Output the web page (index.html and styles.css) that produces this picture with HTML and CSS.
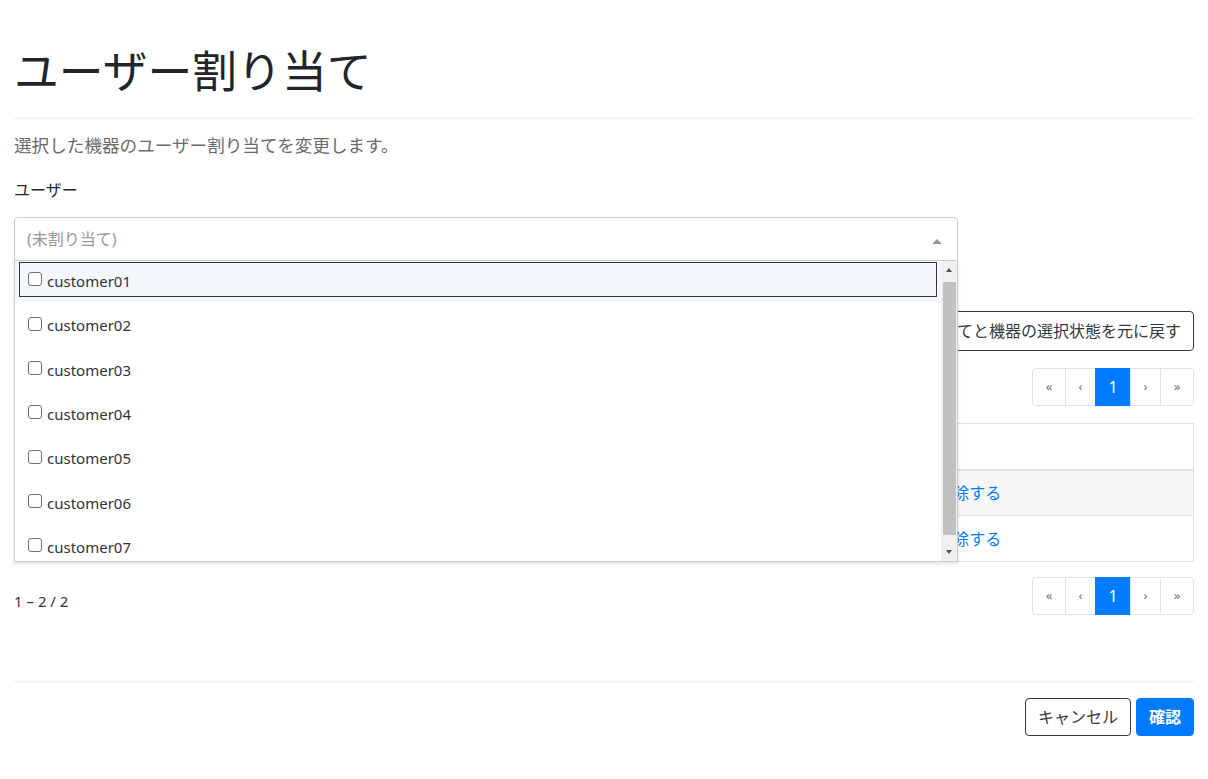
FILE: index.html
```html
<!DOCTYPE html>
<html lang="ja">
<head>
  <meta charset="UTF-8">
  <meta name="viewport" content="width=device-width, initial-scale=1.0">
  <title>ユーザー割り当て</title>
  <link rel="stylesheet" href="styles.css">
</head>
<body>
  <div class="page">
    <h1 class="page-title">ユーザー割り当て</h1>
    <p class="page-desc">選択した機器のユーザー割り当てを変更します。</p>

    <div class="form-group">
      <label class="form-label">ユーザー</label>
      <div class="picker">
        <div class="picker-box">
          <span class="picker-placeholder">(未割り当て)</span>
          <span class="picker-caret"></span>
        </div>
        <!-- open dropdown, lies over the content below -->
        <div class="picker-menu">
          <ul class="picker-list">
            <li class="picker-item active"><div class="picker-opt"><span class="check"></span>customer01</div></li>
            <li class="picker-item"><div class="picker-opt"><span class="check"></span>customer02</div></li>
            <li class="picker-item"><div class="picker-opt"><span class="check"></span>customer03</div></li>
            <li class="picker-item"><div class="picker-opt"><span class="check"></span>customer04</div></li>
            <li class="picker-item"><div class="picker-opt"><span class="check"></span>customer05</div></li>
            <li class="picker-item"><div class="picker-opt"><span class="check"></span>customer06</div></li>
            <li class="picker-item"><div class="picker-opt"><span class="check"></span>customer07</div></li>
          </ul>
          <div class="scrollbar">
            <span class="sb-btn sb-up"></span>
            <span class="sb-thumb"></span>
            <span class="sb-btn sb-down"></span>
          </div>
        </div>
      </div>
    </div>

    <div class="toolbar">
      <button class="btn btn-outline">ユーザー割り当てと機器の選択状態を元に戻す</button>
    </div>

    <div class="pager-row pager-top">
      <ul class="pagination">
        <li class="page-item"><a class="page-link">«</a></li>
        <li class="page-item"><a class="page-link">‹</a></li>
        <li class="page-item active"><a class="page-link">1</a></li>
        <li class="page-item"><a class="page-link">›</a></li>
        <li class="page-item"><a class="page-link">»</a></li>
      </ul>
    </div>

    <table class="table">
      <thead>
        <tr>
          <th class="col-check"></th>
          <th></th>
          <th></th>
          <th class="col-action"></th>
        </tr>
      </thead>
      <tbody>
        <tr class="row-odd">
          <td></td>
          <td></td>
          <td></td>
          <td><a class="link">割り当てを解除する</a></td>
        </tr>
        <tr>
          <td></td>
          <td></td>
          <td></td>
          <td><a class="link">割り当てを解除する</a></td>
        </tr>
      </tbody>
    </table>

    <div class="pager-row pager-bottom">
      <span class="pager-count">1 – 2 / 2</span>
      <ul class="pagination">
        <li class="page-item"><a class="page-link">«</a></li>
        <li class="page-item"><a class="page-link">‹</a></li>
        <li class="page-item active"><a class="page-link">1</a></li>
        <li class="page-item"><a class="page-link">›</a></li>
        <li class="page-item"><a class="page-link">»</a></li>
      </ul>
    </div>

    <div class="footer">
      <button class="btn btn-outline">キャンセル</button>
      <button class="btn btn-primary">確認</button>
    </div>
  </div>
</body>
</html>
```

FILE: styles.css
```css
* {
  box-sizing: border-box;
  margin: 0;
  padding: 0;
}

body {
  background: #fff;
  color: #212529;
  font-family: "Noto Sans", "Noto Sans CJK JP", sans-serif;
  font-size: 16px;
  line-height: 1.5;
}

.page {
  padding: 44px 14px 40px 14px;
}

.page-title {
  font-size: 44.8px;
  font-weight: 400;
  line-height: 1.2;
  padding-bottom: 20px;
  border-bottom: 1px solid #e9ecef;
}

.page-desc {
  margin-top: 13px;
  font-size: 17.6px;
  color: #6b6b6b;
}

.form-group {
  margin-top: 20px;
}

.form-label {
  display: block;
  margin-bottom: 15px;
}

/* dropdown picker */
.picker {
  position: relative;
  width: 944px;
}

.picker-box {
  height: 44px;
  border: 1px solid #ccc;
  border-radius: 4px 4px 0 0;
  padding: 0 12px;
  display: flex;
  align-items: center;
  justify-content: space-between;
}

.picker-placeholder {
  color: #999;
}

.picker-caret {
  width: 0;
  height: 0;
  border-left: 5px solid transparent;
  border-right: 5px solid transparent;
  border-bottom: 5px solid #999;
  margin-right: 3px;
  margin-top: 4px;
}

.picker-menu {
  position: absolute;
  top: 100%;
  left: 0;
  right: 0;
  height: 301px;
  background: #fff;
  border: 1px solid #ccc;
  border-top: none;
  box-shadow: 0 2px 4px rgba(0, 0, 0, 0.12);
  display: flex;
  z-index: 10;
}

.picker-list {
  list-style: none;
  flex: 1;
  overflow: hidden;
  padding-top: 1px;
}

.picker-item {
  height: 40px;
  margin-bottom: 4.4px;
  padding: 0 4px 5px 4px;
  font-size: 15px;
  color: #333;
}

.picker-item.active {
  background: #f4f8fc;
}

.picker-opt {
  height: 35px;
  border: 1px solid transparent;
  display: flex;
  align-items: center;
  padding-left: 8px;
  padding-top: 3px;
}

.picker-item.active .picker-opt {
  border-color: #333;
}

.check {
  width: 14px;
  height: 14px;
  border: 1px solid #6f6f6f;
  border-radius: 3px;
  margin-right: 5px;
  margin-top: -4px;
  background: #fff;
}

.scrollbar {
  width: 16px;
  background: #f1f1f1;
  display: flex;
  flex-direction: column;
  align-items: center;
}

.sb-btn {
  height: 17px;
  width: 15px;
  position: relative;
}

.sb-btn::after {
  content: "";
  position: absolute;
  left: 4px;
  width: 0;
  height: 0;
  border-left: 3.5px solid transparent;
  border-right: 3.5px solid transparent;
}

.sb-up::after {
  top: 7px;
  border-bottom: 4px solid #505050;
}

.sb-down {
  margin-top: auto;
}

.sb-down::after {
  top: 6px;
  border-top: 4px solid #505050;
}

.sb-thumb {
  width: 13px;
  height: 253px;
  margin-top: 4px;
  background: #c1c1c1;
}

/* buttons */
.btn {
  font-family: inherit;
  font-size: 16px;
  line-height: 1.5;
  padding: 6px 12px;
  border-radius: 4px;
  border: 1px solid transparent;
  background: #fff;
  cursor: pointer;
}

.btn-outline {
  border-color: #343a40;
  color: #343a40;
}

.btn-primary {
  background: #007bff;
  border-color: #007bff;
  color: #fff;
  font-weight: bold;
}

.toolbar {
  margin-top: 50px;
  display: flex;
  justify-content: flex-end;
}

.toolbar .btn {
  padding: 7px 12px;
}

/* pagination */
.pager-row {
  margin-top: 17px;
  display: flex;
  justify-content: space-between;
  align-items: center;
}

.pager-top {
  justify-content: flex-end;
}

.pager-count {
  font-size: 15px;
  color: #333;
  padding-top: 10px;
}

.pagination {
  list-style: none;
  display: flex;
}

.page-link {
  display: flex;
  align-items: center;
  justify-content: center;
  height: 38px;
  width: 31px;
  border: 1px solid #dee2e6;
  margin-left: -1px;
  font-size: 13px;
  color: #6c757d;
}

.page-item:first-child .page-link,
.page-item:last-child .page-link {
  width: 34px;
}

.page-item:first-child .page-link {
  border-radius: 4px 0 0 4px;
}

.page-item:last-child .page-link {
  border-radius: 0 4px 4px 0;
}

.page-item.active .page-link {
  width: 36px;
  background: #007bff;
  border-color: #007bff;
  color: #fff;
  font-size: 16px;
}

/* table */
.table {
  width: 100%;
  margin-top: 17px;
  border-collapse: collapse;
  border: 1px solid #dee2e6;
}

.table th {
  height: 46px;
  text-align: left;
  font-weight: bold;
  padding: 0 12px;
  border-bottom: 2px solid #dee2e6;
}

.table td {
  height: 46px;
  padding: 0 12px;
  border-top: 1px solid #dee2e6;
}

.col-check {
  width: 40px;
}

.col-action {
  width: 348px;
}

.row-odd td {
  background: #f7f7f7;
}

.link {
  color: #007bff;
}

.pager-bottom {
  margin-top: 15px;
}

.footer {
  margin-top: 66px;
  padding-top: 16px;
  border-top: 1px solid #e9ecef;
  display: flex;
  justify-content: flex-end;
  gap: 5px;
}
```
